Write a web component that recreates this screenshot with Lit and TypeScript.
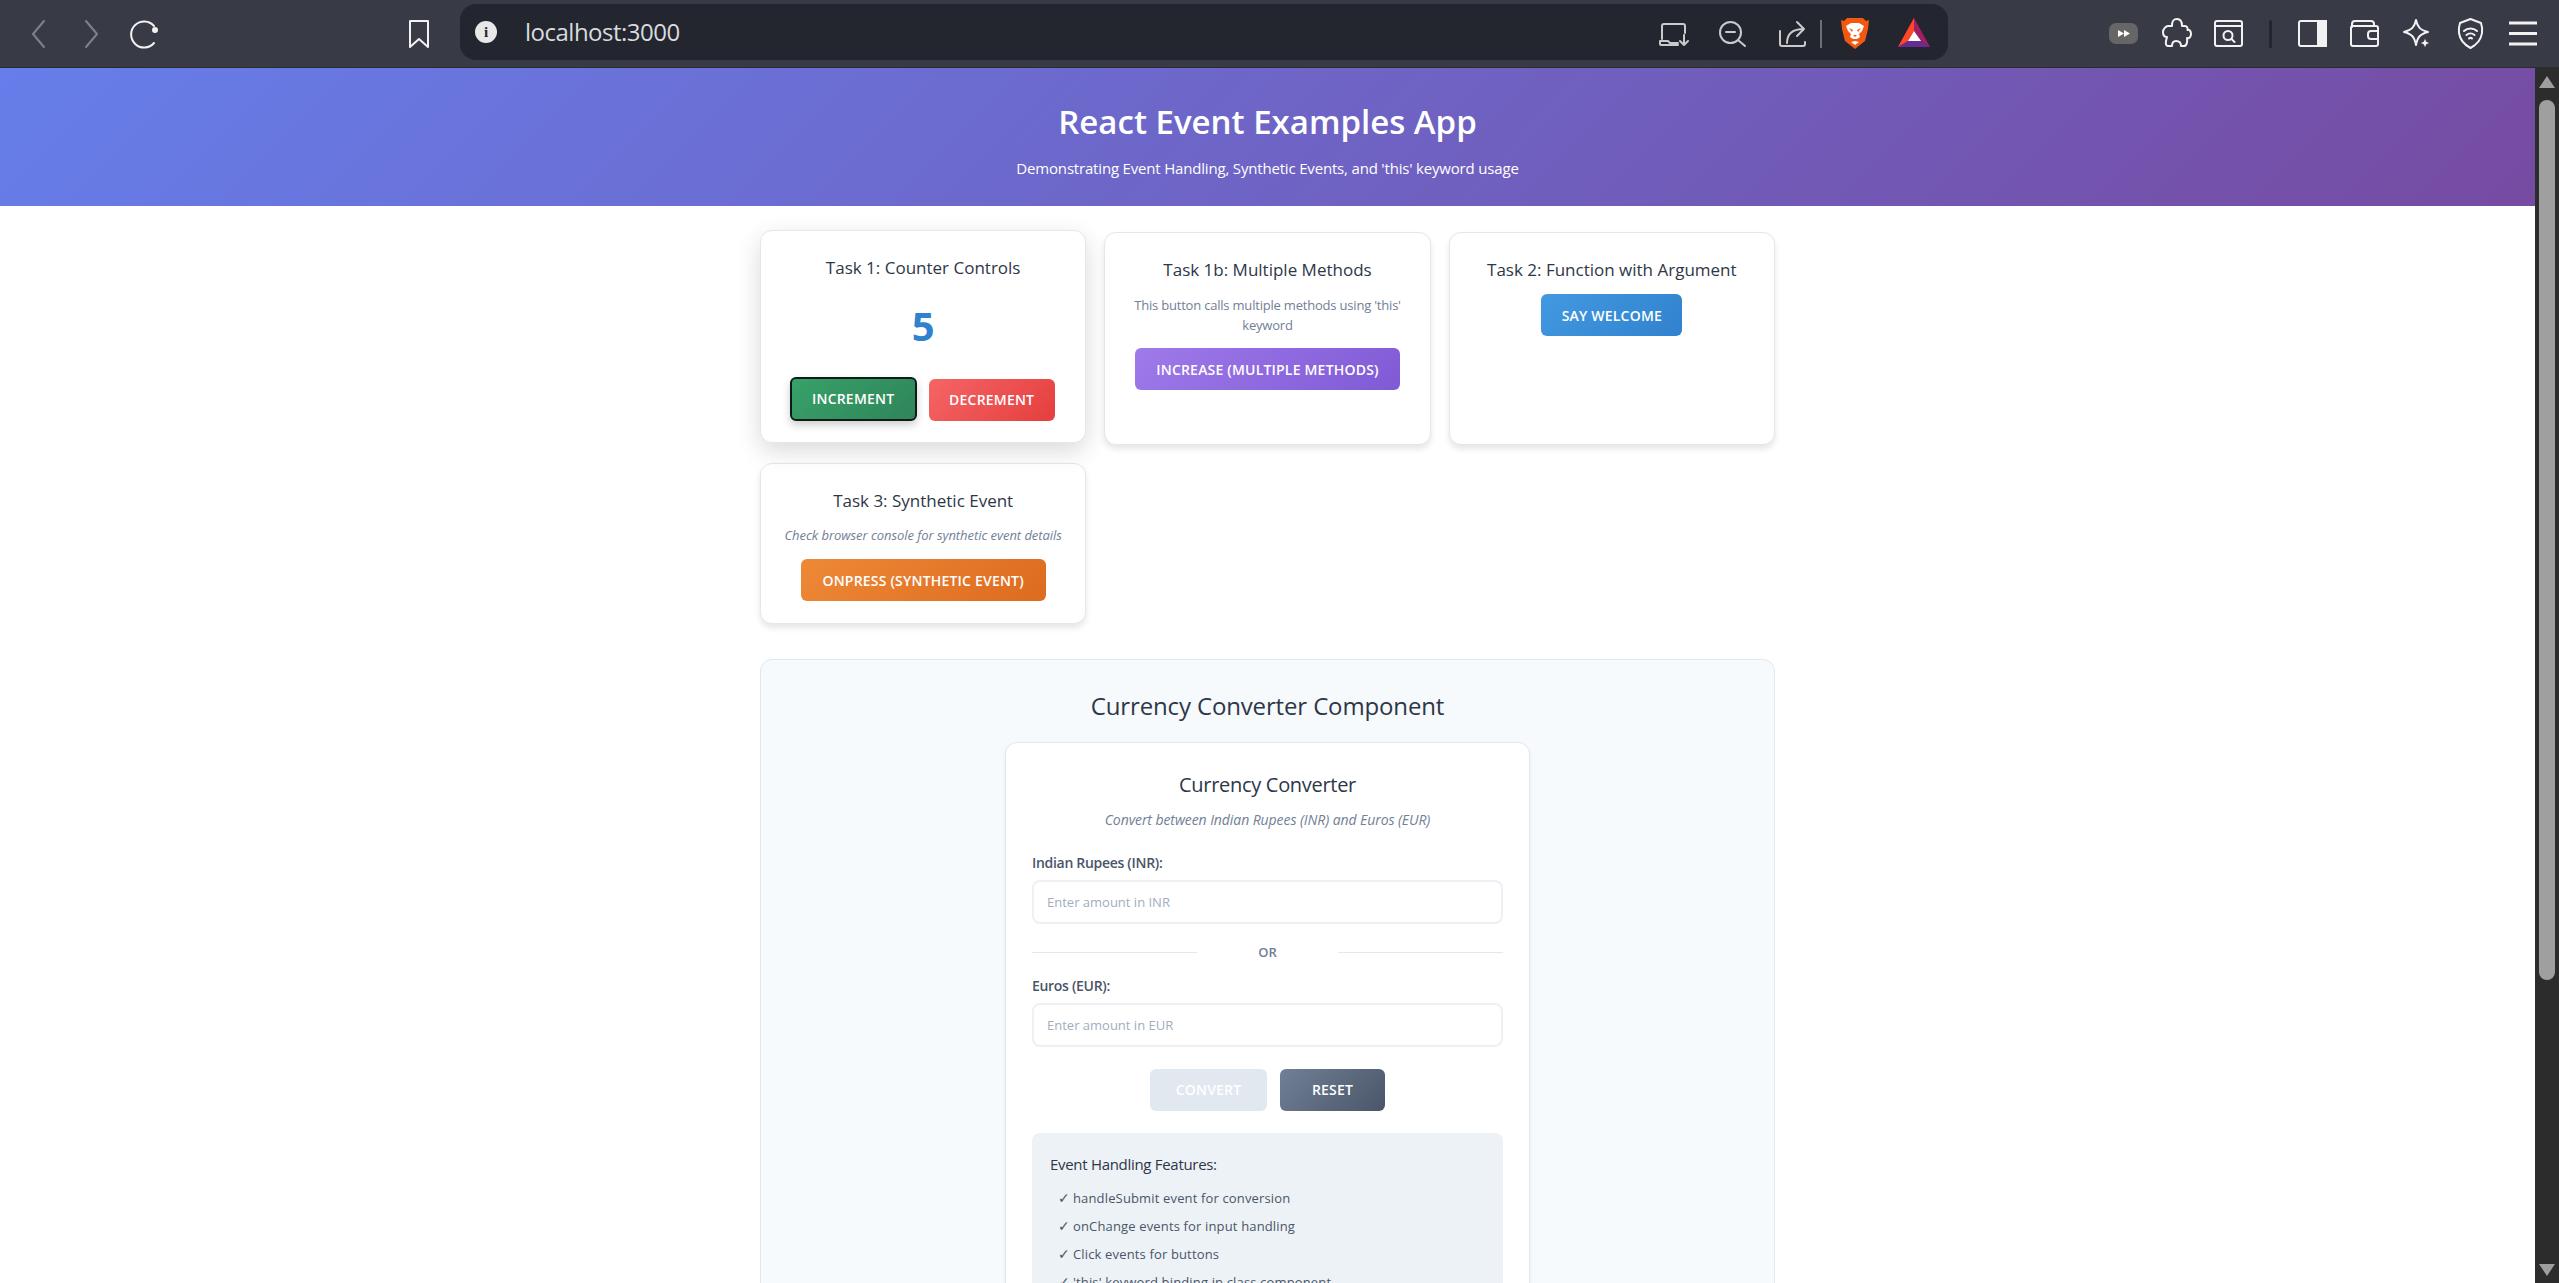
import { LitElement, html, css, svg } from 'lit';
import { customElement } from 'lit/decorators.js';

const ic = (w: number, h: number, body: unknown, cls = '') =>
  html`<svg class=${cls} width=${w} height=${h} viewBox="0 0 ${w} ${h}" fill="none" stroke="currentColor" stroke-width="2" stroke-linecap="round" stroke-linejoin="round">${body}</svg>`;

const features = [
  'handleSubmit event for conversion',
  'onChange events for input handling',
  'Click events for buttons',
  "'this' keyword binding in class component",
];

@customElement('app-root')
export class AppRoot extends LitElement {
  static styles = css`
    :host {
      display: flex;
      flex-direction: column;
      height: 100vh;
      overflow: hidden;
      font-family: 'Open Sans', 'Noto Sans', sans-serif;
      color: #2d3748;
      background: #fff;
    }
    .chrome {
      flex: none;
      height: 67px;
      display: flex;
      align-items: center;
      background: #383b45;
      border-bottom: 1px solid #2b2c30;
      color: #f2f2f2;
    }
    .chrome svg { display: block; flex: none; }
    .nav { display: flex; align-items: center; margin-left: 30px; }
    .dim { color: #7f8188; }
    .fwd { margin-left: 38px; }
    .reload { margin-left: 30px; }
    .mark { margin-left: 248px; }
    .url {
      width: 1488px;
      height: 56px;
      margin: -3px 0 0 30px;
      border-radius: 16px;
      background: #23262e;
      display: flex;
      align-items: center;
    }
    .info {
      width: 22px;
      height: 22px;
      margin-left: 15px;
      border-radius: 50%;
      background: #e8e8e8;
      color: #23262e;
      font: 700 15px/22px 'Liberation Serif', serif;
      text-align: center;
    }
    .host-text {
      margin: -2px 0 0 28px;
      font-size: 24px;
      letter-spacing: -0.5px;
      color: #d9dbde;
    }
    .url-icons {
      margin: 3px 18px 0 auto;
      display: flex;
      align-items: center;
      color: #c9cacc;
    }
    .ext { display: flex; align-items: center; margin-left: 161px; }
    .ml14 { margin-left: 14px; }
    .ml19 { margin-left: 19px; }
    .ml21 { margin-left: 21px; }
    .ml22 { margin-left: 22px; }
    .ml24 { margin-left: 24px; }
    .ml25 { margin-left: 25px; }
    .ml26 { margin-left: 26px; }
    .ml29 { margin-left: 29px; }
    .ml30 { margin-left: 30px; }
    .ml31 { margin-left: 31px; }
    .url-sep { width: 2px; height: 28px; background: #6d6f74; }
    .bar-sep { width: 3px; height: 28px; border-radius: 2px; background: #23262e; }
    .body { flex: 1; display: flex; min-height: 0; }
    .page { flex: 1; min-width: 0; overflow: hidden; }
    .hero {
      height: 138px;
      box-sizing: border-box;
      padding-top: 32px;
      text-align: center;
      color: #fff;
      background: linear-gradient(135deg, #667eea 0%, #764ba2 100%);
    }
    .hero h1 { margin: 0; font-size: 33px; line-height: 44px; font-weight: 600; }
    .hero p { margin: 13px 0 0; font-size: 15px; line-height: 22px; letter-spacing: -0.18px; }
    .wrap { width: 1015px; margin: 26px auto 0; }
    .grid { display: grid; grid-template-columns: repeat(3, 1fr); gap: 18px; }
    .card {
      box-sizing: border-box;
      height: 213px;
      padding: 24px 12px 0;
      background: #fff;
      border: 1px solid #e2e8f0;
      border-radius: 12px;
      box-shadow: 0 4px 6px rgba(0, 0, 0, 0.1);
      text-align: center;
    }
    .card.lifted {
      transform: translateY(-2px);
      box-shadow: 0 8px 25px rgba(0, 0, 0, 0.15);
    }
    .card.short { height: 161px; }
    h3 { margin: 0; font-size: 17px; line-height: 26px; font-weight: 400; color: #2d3748; }
    .count { margin: 18px 0 0; font-size: 40px; line-height: 54px; font-weight: 700; color: #3182ce; }
    .row { display: flex; justify-content: center; gap: 12px; }
    .counter-row { margin-top: 24px; padding-right: 2px; }
    .note { margin: 12px auto 0; width: 290px; font-size: 13px; line-height: 20px; letter-spacing: -0.2px; color: #718096; }
    .note.i { margin-top: 11px; width: auto; white-space: nowrap; font-style: italic; letter-spacing: -0.05px; }
    button {
      flex: none;
      display: block;
      height: 42px;
      margin: 0 auto;
      padding: 0;
      border: 0;
      border-radius: 6px;
      font: 600 14px/40px 'Open Sans', sans-serif;
      letter-spacing: 0.2px;
      color: #fff;
      text-transform: uppercase;
    }
    .row button { margin: 0; }
    .green {
      width: 127px;
      height: 44px;
      border: 2px solid #101a16;
      background: linear-gradient(135deg, #38a169, #2f855a);
      box-shadow: 0 4px 8px rgba(0, 0, 0, 0.2);
    }
    .red { width: 126px; background: linear-gradient(135deg, #f56565, #e53e3e); margin-top: 2px !important; }
    .purple { width: 265px; margin-top: 13px; padding-top: 2px; background: linear-gradient(135deg, #9f7aea, #805ad5); }
    .blue { width: 141px; margin-top: 11px; padding-top: 2px; background: linear-gradient(135deg, #4299e1, #3182ce); }
    .orange { width: 245px; margin-top: 14px; padding-top: 2px; background: linear-gradient(135deg, #ed8936, #dd6b20); }
    .section {
      height: 800px;
      box-sizing: border-box;
      margin-top: 35px;
      padding-top: 28px;
      background: #f7fafc;
      border: 1px solid #e2e8f0;
      border-radius: 12px;
    }
    h2 { margin: 0; text-align: center; font-size: 24px; line-height: 36px; font-weight: 400; letter-spacing: -0.14px; color: #2d3748; }
    .conv {
      box-sizing: border-box;
      width: 525px;
      height: 700px;
      margin: 18px auto 0;
      padding: 26px 26px 0;
      background: #fff;
      border: 1px solid #e2e8f0;
      border-radius: 12px;
      box-shadow: 0 2px 4px rgba(0, 0, 0, 0.06);
    }
    .conv h3 { text-align: center; font-size: 20px; line-height: 32px; letter-spacing: -0.3px; }
    .conv .sub { margin: 9px 0 0; text-align: center; font-size: 14px; line-height: 20px; font-style: italic; letter-spacing: -0.08px; color: #718096; }
    label { display: block; font-size: 14px; line-height: 20px; font-weight: 600; letter-spacing: -0.3px; color: #4a5568; }
    .first { margin-top: 23px; }
    input {
      display: block;
      box-sizing: border-box;
      width: 100%;
      height: 44px;
      margin-top: 7px;
      padding: 0 13px;
      border: 2px solid #edf0f5;
      border-radius: 8px;
      font: 400 13px 'Open Sans', sans-serif;
      background: #fff;
    }
    input::placeholder { color: #a0aec0; opacity: 1; }
    .or { display: flex; align-items: center; height: 20px; margin: 18px 0 14px; font-size: 13px; font-weight: 600; color: #718096; }
    .or i { flex: 1; height: 1px; background: #e2e8f0; }
    .or span { width: 141px; text-align: center; }
    .actions { margin-top: 22px; gap: 13px; }
    .gray { width: 117px; background: #e2e8f0; }
    .slate { width: 105px; background: linear-gradient(135deg, #718096, #4a5568); }
    .features {
      box-sizing: border-box;
      height: 300px;
      margin-top: 22px;
      padding: 18px 18px 0;
      background: #edf2f7;
      border-radius: 8px;
    }
    .features h4 { margin: 0; font-size: 15px; line-height: 26px; font-weight: 400; letter-spacing: -0.3px; color: #2d3748; }
    .features ul { margin: 7px 0 0; padding: 0 0 0 8px; list-style: none; }
    .features li { font-size: 13px; line-height: 28px; letter-spacing: 0.15px; color: #4a5568; white-space: nowrap; }
    .tick { display: inline-block; width: 15px; font-family: 'DejaVu Sans', sans-serif; font-size: 14px; letter-spacing: 0; }
    .scroll {
      flex: none;
      width: 24px;
      box-sizing: border-box;
      padding: 8px 4px 7px;
      background: #2c2c2c;
      display: flex;
      flex-direction: column;
      align-items: center;
    }
    .thumb { width: 16px; height: 880px; margin-top: 12px; border-radius: 8px; background: #9f9f9f; }
    .tri { display: block; flex: none; }
    .tri.down { margin-top: auto; }
  `;

  private urlIcons() {
    return html`<div class="url-icons">
      ${ic(30, 34, svg`<path d="M3 22V9a2 2 0 0 1 2-2h19a2 2 0 0 1 2 2v7"/><path d="M1 24h8l2 2h8M1 24v3a1 1 0 0 0 1 1h17"/><path d="M25 18v10M21 24l4 4 4-4"/>`)}
      ${ic(28, 34, svg`<circle cx="11.5" cy="15.5" r="10.5"/><path d="M19 23l7 6M7 15h9"/>`, 'ml30')}
      ${ic(28, 34, svg`<path d="M2 14v13a2 2 0 0 0 2 2h21a2 2 0 0 0 2-2v-2"/><path d="M9 26c0-9 6-14 17-14M19 5l7 7-7 7"/>`, 'ml31')}
      <div class="url-sep ml14"></div>
      <svg class="ml19" width="28" height="34" viewBox="0 0 28 34">
        <path d="M6 1h16l3 3 3-1-1 9-3 12-10 8-10-8L1 12 0 3l3 1z" fill="#f4570f" />
        <path d="M5 9l5-3h8l5 3-2 5-3 3 1 3-3 2h-4l-3-2 1-3-3-3z" fill="#fff" />
        <path d="M8 11l4 2-1 2zM20 11l-4 2 1 2zM12 18h4l-2 2z" fill="#f4570f" />
        <path d="M10 25l4-1 4 1-4 3z" fill="#fff" />
      </svg>
      <svg class="ml29" width="32" height="34" viewBox="0 0 32 34">
        <path d="M16 1 0 30h32z" fill="#9e1f63" />
        <path d="M16 1 0 30l10-6 6-10z" fill="#ff4724" />
        <path d="M0 30l10-6h13l9 6z" fill="#662d91" />
        <path d="M16 14l-6 10h13z" fill="#fff" />
      </svg>
    </div>`;
  }

  private extIcons() {
    return html`<div class="ext">
      <svg width="29" height="34" viewBox="0 0 29 34">
        <rect y="6" width="29" height="21" rx="7" fill="#666" />
        <path d="M9 13l6 3.5-6 3.5zM15 13l6 3.5-6 3.5z" fill="#fff" />
      </svg>
      ${ic(30, 34, svg`<path d="M10 9C10 4 11 2 15 2s5 3 5 7h3c2 0 3 2 2.500 4 2.500-1 3.500 2 3.500 4 0 3-2 5-4 4 .5 3 0 8-3 8h-3c0-4-2-5-5-5s-4 2-4 5H6c-2 0-2.500-2-2-5l1-4c-3 0-4-2-4-5s3-6 5-6z"/>`, 'ml24')}
      ${ic(30, 34, svg`<rect x="1" y="4" width="27" height="25" rx="2"/><path d="M1 9h27"/><circle cx="14" cy="18.500" r="4.500"/><path d="M17.500 22l3 3"/>`, 'ml22')}
      <div class="bar-sep ml25"></div>
      <svg class="ml26" width="30" height="34" viewBox="0 0 30 34" fill="none" stroke="currentColor" stroke-width="2">
        <rect x="1" y="4" width="27" height="25" rx="2" />
        <rect x="20" y="4" width="8" height="25" fill="currentColor" />
      </svg>
      ${ic(30, 34, svg`<path d="M2 10V7a3 3 0 0 1 3-3h16a3 3 0 0 1 3 3v2"/><rect x="1" y="9" width="27" height="20" rx="2"/><path d="M28 14h-7a3 3 0 0 0-3 3v2a3 3 0 0 0 3 3h7"/>`, 'ml22')}
      <svg class="ml22" width="29" height="34" viewBox="0 0 29 34" fill="none" stroke="currentColor" stroke-width="2" stroke-linejoin="round">
        <path d="M14 3c1.500 7 4 10 12 12-8 2-10.500 5-12 13-1.500-8-4-11-12-13 8-2 10.500-5 12-12z" />
        <path d="M23 20l1.500 4.500 4.500 1.500-4.500 1.500-1.500 4.500-1.500-4.500-4.500-1.500 4.500-1.500z" fill="currentColor" stroke="#383b45" stroke-width="1" />
      </svg>
      ${ic(27, 34, svg`<path d="M13.500 2 24 6c1 3 1.500 6 1 10-1 7-6 12-11.500 15C8 28 3 23 2 16c-.5-4 0-7 1-10z"/><path d="M7 14a9.500 9.500 0 0 1 13 0M9.500 18a6 6 0 0 1 8 0M12 21.500a2 2 0 0 1 3 0"/>`, 'ml26')}
      <svg class="ml24" width="30" height="34" viewBox="0 0 30 34" stroke="currentColor" stroke-width="3">
        <path d="M1 6h28M1 16.500h28M1 27h28" />
      </svg>
    </div>`;
  }

  private toolbar() {
    return html`<div class="chrome">
      <div class="nav">
        ${ic(16, 30, svg`<path d="M14 2 3 15l11 13"/>`, 'dim')}
        ${ic(16, 30, svg`<path d="M2 2l11 13L2 28"/>`, 'dim fwd')}
        ${ic(30, 30, svg`<path d="M24 7a13 13 0 1 0 0 17"/><circle cx="25" cy="11" r="2" fill="currentColor"/>`, 'reload')}
      </div>
      ${ic(22, 30, svg`<path d="M2 2h18v26l-9-8-9 8z"/>`, 'mark')}
      <div class="url">
        <div class="info">i</div>
        <span class="host-text">localhost:3000</span>
        ${this.urlIcons()}
      </div>
      ${this.extIcons()}
    </div>`;
  }

  render() {
    return html`${this.toolbar()}
      <div class="body">
        <div class="page">
          <header class="hero">
            <h1>React Event Examples App</h1>
            <p>Demonstrating Event Handling, Synthetic Events, and 'this' keyword usage</p>
          </header>
          <div class="wrap">
            <div class="grid">
              <div class="card lifted">
                <h3>Task 1: Counter Controls</h3>
                <div class="count">5</div>
                <div class="row counter-row">
                  <button class="green">Increment</button>
                  <button class="red">Decrement</button>
                </div>
              </div>
              <div class="card">
                <h3>Task 1b: Multiple Methods</h3>
                <p class="note">This button calls multiple methods using 'this' keyword</p>
                <button class="purple">Increase (Multiple Methods)</button>
              </div>
              <div class="card">
                <h3>Task 2: Function with Argument</h3>
                <button class="blue">Say Welcome</button>
              </div>
              <div class="card short">
                <h3>Task 3: Synthetic Event</h3>
                <p class="note i">Check browser console for synthetic event details</p>
                <button class="orange">OnPress (Synthetic Event)</button>
              </div>
            </div>
            <section class="section">
              <h2>Currency Converter Component</h2>
              <div class="conv">
                <h3>Currency Converter</h3>
                <p class="sub">Convert between Indian Rupees (INR) and Euros (EUR)</p>
                <label class="first">Indian Rupees (INR):</label>
                <input placeholder="Enter amount in INR" />
                <div class="or"><i></i><span>OR</span><i></i></div>
                <label>Euros (EUR):</label>
                <input placeholder="Enter amount in EUR" />
                <div class="row actions">
                  <button class="gray">Convert</button>
                  <button class="slate">Reset</button>
                </div>
                <div class="features">
                  <h4>Event Handling Features:</h4>
                  <ul>${features.map((f) => html`<li><span class="tick">✓</span>${f}</li>`)}</ul>
                </div>
              </div>
            </section>
          </div>
        </div>
        <div class="scroll">
          <svg class="tri" width="16" height="12" viewBox="0 0 16 12"><path d="M8 0l8 12H0z" fill="#9f9f9f"/></svg>
          <div class="thumb"></div>
          <svg class="tri down" width="16" height="12" viewBox="0 0 16 12"><path d="M8 12 0 0h16z" fill="#9f9f9f"/></svg>
        </div>
      </div>`;
  }
}
